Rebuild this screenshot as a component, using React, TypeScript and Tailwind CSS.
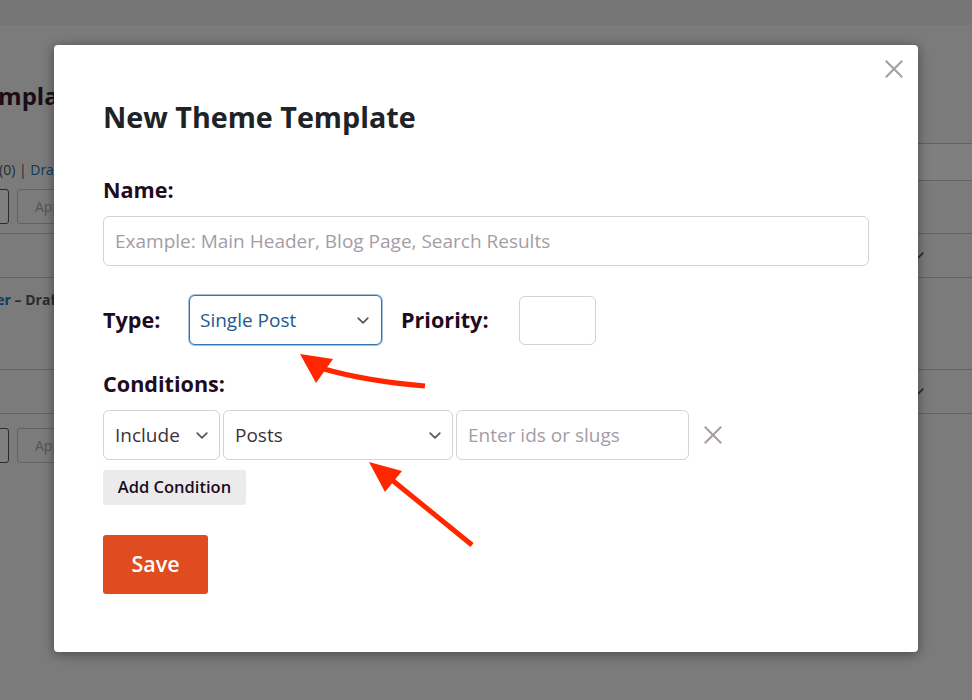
import React from "react";

const Chevron = () => (
  <svg width="12" height="7" viewBox="0 0 12 7" className="shrink-0">
    <path d="M1.2 1.2 6 5.8l4.8-4.6" fill="none" stroke="#50575e" strokeWidth="1.7" strokeLinecap="round" strokeLinejoin="round" />
  </svg>
);

const Cross = ({ size = 18 }: { size?: number }) => (
  <svg width={size} height={size} viewBox="0 0 18 18">
    <path d="M1.5 1.5l15 15M16.5 1.5l-15 15" stroke="#a59ca5" strokeWidth="2" strokeLinecap="square" />
  </svg>
);

function BackPage() {
  return (
    <div className="absolute inset-0 bg-[#f6f6f6] text-[#1d2327]">
      <div className="h-[25px] bg-[#ececec]" />
      <h1 className="mt-[55px] -ml-[30px] text-[24px] leading-[32px] font-bold text-[#34182f] whitespace-nowrap">
        Templates
      </h1>
      <div className="mt-[31px] h-[38px] flex items-end justify-between">
        <div className="-ml-[1px] mb-[1px] text-[14px] leading-[20px] text-[#50575e] whitespace-nowrap">
          (0) | <span className="text-[#2271b1]">Drafts</span> (1)
        </div>
        <div className="w-[200px] h-[38px] -mr-[20px] bg-white border border-[#c3c4c7] rounded-[4px]" />
      </div>
      <div className="mt-[8px] flex gap-[8px] h-[35px]">
        <div className="-ml-[120px] w-[129px] h-full bg-white border border-[#50575e] rounded-[3px]" />
        <div className="w-[80px] h-full border border-[#c3c4c7] rounded-[3px] pl-[17px] text-[14px] leading-[33px] text-[#a7aaad]">
          Apply
        </div>
      </div>
      <div className="mt-[9px] border-t border-[#c3c4c7]">
        <div className="h-[44px] flex items-center border-b border-[#c3c4c7]">
          <div className="flex-1" />
          <div className="w-[60px]"><Chevron /></div>
        </div>
        <div className="h-[92px] border-b border-[#c3c4c7] pt-[12px]">
          <div className="-ml-[40px] text-[14px] leading-[20px] font-bold whitespace-nowrap">
            <span className="text-[#2271b1]">Header</span> <span className="text-[#50575e]">– Draft</span>
          </div>
        </div>
        <div className="h-[44px] flex items-center border-b border-[#c3c4c7]">
          <div className="flex-1" />
          <div className="w-[60px]"><Chevron /></div>
        </div>
      </div>
      <div className="mt-[14px] flex gap-[8px] h-[35px]">
        <div className="-ml-[120px] w-[129px] h-full bg-white border border-[#50575e] rounded-[3px]" />
        <div className="w-[80px] h-full border border-[#c3c4c7] rounded-[3px] pl-[17px] text-[14px] leading-[33px] text-[#a7aaad]">
          Apply
        </div>
      </div>
    </div>
  );
}

function Select({ label, w, focus }: { label: string; w: string; focus?: boolean }) {
  return (
    <div
      className={
        focus
          ? `${w} h-[50px] flex items-center justify-between pl-[10px] pr-[12px] bg-white border border-[#3874ae] rounded-[6px] shadow-[0_0_0_1px_rgba(56,116,174,0.45)] text-[19px] text-[#22598f]`
          : `${w} h-[50px] flex items-center justify-between pl-[11px] pr-[11px] bg-white border border-[#d5d1d5] rounded-[6px] text-[19px] text-[#3b333b]`
      }
    >
      <span>{label}</span>
      <Chevron />
    </div>
  );
}

function Modal() {
  return (
    <div className="relative w-[864px] h-[607px] bg-white rounded-[4px] shadow-[0_2px_12px_rgba(20,0,20,0.45)] px-[49px] pt-[54px]">
      <button className="absolute top-[15px] right-[15px]">
        <Cross />
      </button>
      <h2 className="text-[28.7px] leading-[36px] font-bold text-[#1d2327]">New Theme Template</h2>

      <div className="mt-[40px] text-[21.6px] leading-[30px] font-bold text-[#1e0b1e]">Name:</div>
      <input
        readOnly
        placeholder="Example: Main Header, Blog Page, Search Results"
        className="mt-[11px] block w-full h-[50px] px-[11px] border border-[#d5d1d5] rounded-[6px] text-[19px] outline-none placeholder:text-[#a59ca5]"
      />

      <div className="mt-[29px] h-[50px] flex items-center">
        <div className="w-[86px] text-[21.6px] font-bold text-[#1e0b1e]">Type:</div>
        <Select label="Single Post" w="w-[193px]" focus />
        <div className="ml-[19px] text-[21.6px] font-bold text-[#1e0b1e]">Priority:</div>
        <input readOnly className="ml-[30px] w-[77px] h-[49px] border border-[#d5d1d5] rounded-[6px] outline-none" />
      </div>

      <div className="mt-[24px] text-[21.6px] leading-[30px] font-bold text-[#1e0b1e]">Conditions:</div>
      <div className="mt-[11px] flex items-center gap-[3px]">
        <Select label="Include" w="w-[117px]" />
        <Select label="Posts" w="w-[230px]" />
        <input
          readOnly
          placeholder="Enter ids or slugs"
          className="w-[233px] h-[50px] px-[11px] border border-[#d5d1d5] rounded-[6px] text-[19px] outline-none placeholder:text-[#a59ca5]"
        />
        <button className="ml-[12px]">
          <Cross />
        </button>
      </div>

      <button className="mt-[10px] block w-[143px] h-[35px] bg-[#ebebeb] rounded-[3px] text-[16.5px] font-semibold text-[#1e0b1e]">
        Add Condition
      </button>
      <button className="mt-[30px] block w-[105px] h-[59px] bg-[#e04b1f] rounded-[3px] text-[21.5px] font-semibold text-white">
        Save
      </button>
    </div>
  );
}

export default function App() {
  return (
    <div className="relative w-[972px] h-[700px] overflow-hidden font-['Open_Sans',sans-serif]">
      <BackPage />
      <div className="absolute inset-0 bg-black/50 pt-[45px] pl-[54px]">
        <Modal />
      </div>
      {/* annotation arrows */}
      <svg className="absolute inset-0 pointer-events-none" width="972" height="700" viewBox="0 0 972 700">
        <path d="M425 386 Q366 381 324 369" fill="none" stroke="#ff2600" strokeWidth="5" />
        <polygon points="300,354 333,359 316,383" fill="#ff2600" />
        <path d="M472 545 L392 480" fill="none" stroke="#ff2600" strokeWidth="5" />
        <polygon points="369,462 402,471 385,492" fill="#ff2600" />
      </svg>
    </div>
  );
}
